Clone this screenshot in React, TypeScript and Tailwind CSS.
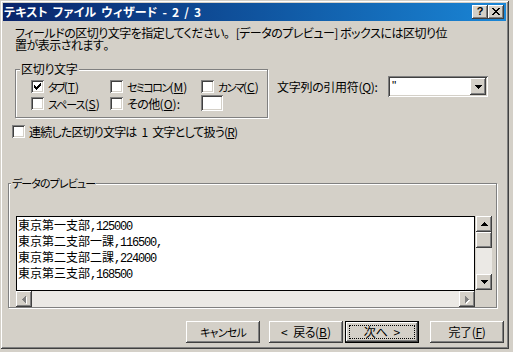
import React from 'react'

// ─────────────────────────────────────────────
// Pixel helpers (classic Windows bevels & glyphs)
// ─────────────────────────────────────────────

type Run = [number, number, number] // row, x0, x1

function Pix({ runs, color, w, h }: { runs: Run[]; color: string; w: number; h: number }) {
  return (
    <svg width={w} height={h} shapeRendering="crispEdges" className="block">
      {runs.map(([r, a, b], i) => (
        <rect key={i} x={a} y={r} width={b - a + 1} height={1} fill={color} />
      ))}
    </svg>
  )
}

const upRuns: Run[]   = [[0, 3, 3], [1, 2, 4], [2, 1, 5], [3, 0, 6]]
const downRuns: Run[] = [[0, 0, 6], [1, 1, 5], [2, 2, 4], [3, 3, 3]]
const leftRuns: Run[] = [[0, 3, 3], [1, 2, 3], [2, 1, 3], [3, 0, 3], [4, 1, 3], [5, 2, 3], [6, 3, 3]]
const rightRuns: Run[] = [[0, 0, 0], [1, 0, 1], [2, 0, 2], [3, 0, 3], [4, 0, 2], [5, 0, 1], [6, 0, 0]]
const checkRuns: Run[] = [
  [0, 6, 6], [1, 5, 6], [2, 0, 0], [2, 4, 6], [3, 0, 1], [3, 3, 5],
  [4, 0, 4], [5, 1, 3], [6, 2, 2],
]

const raised = 'bg-[#d4d0c8] shadow-[inset_-1px_-1px_0_#404040,inset_1px_1px_0_#ffffff,inset_-2px_-2px_0_#808080]'
const sunken = 'bg-white shadow-[inset_1px_1px_0_#808080,inset_-1px_-1px_0_#ffffff,inset_2px_2px_0_#404040,inset_-2px_-2px_0_#d4d0c8]'
const etched = 'border border-[#808080] shadow-[inset_1px_1px_0_#ffffff,1px_1px_0_#ffffff]'

// kana in the old UI font are narrow: squeeze only the kana run, keep "(X)" as is
function Kana({ children, track }: { children: React.ReactNode; track: string }) {
  return <span className={`text-[11px] ${track}`}>{children}</span>
}

function Checkbox({ label, checked = false }: { label: React.ReactNode; checked?: boolean }) {
  return (
    <div className="flex items-center h-[13px]">
      <div className={`w-[13px] h-[13px] shrink-0 flex items-center justify-center ${sunken}`}>
        {checked && <Pix runs={checkRuns} color="#000" w={7} h={7} />}
      </div>
      <span className="ml-[4px] leading-[13px] whitespace-nowrap">{label}</span>
    </div>
  )
}

function ArrowBtn({ runs, w, h, disabled }: { runs: Run[]; w: number; h: number; disabled?: boolean }) {
  return (
    <div className={`w-[16px] h-[16px] shrink-0 flex items-center justify-center ${raised}`}>
      {disabled ? (
        <div className="relative">
          <div className="absolute left-[1px] top-[1px]"><Pix runs={runs} color="#fff" w={w} h={h} /></div>
          <div className="relative"><Pix runs={runs} color="#808080" w={w} h={h} /></div>
        </div>
      ) : (
        <Pix runs={runs} color="#000" w={w} h={h} />
      )}
    </div>
  )
}

function Button({ children, isDefault }: { children: React.ReactNode; isDefault?: boolean }) {
  if (isDefault) {
    return (
      <div className="w-[74px] h-[22px] border border-black">
        <div className={`w-full h-full p-[3px] ${raised}`}>
          <div className="w-full h-full border border-dotted border-black flex items-center justify-center leading-[12px] whitespace-nowrap">
            {children}
          </div>
        </div>
      </div>
    )
  }
  return (
    <div className={`w-[74px] h-[22px] flex items-center justify-center leading-[12px] whitespace-nowrap ${raised}`}>
      {children}
    </div>
  )
}

const listRows: [string, string][] = [
  ['東京第一支部', ',125000'],
  ['東京第二支部一課', ',116500,'],
  ['東京第二支部二課', ',224000'],
  ['東京第三支部', ',168500'],
]

// ─────────────────────────────────────────────
// Main Component
// ─────────────────────────────────────────────

export default function App() {
  return (
    <div className="w-[513px] h-[352px] bg-[#d4d0c8] overflow-hidden text-black text-[12px] font-['Noto_Sans_CJK_JP',sans-serif] [font-feature-settings:'palt']">
      <div className="w-[509px] h-[349px] p-[3px] flex flex-col shadow-[inset_1px_1px_0_#d4d0c8,inset_-1px_-1px_0_#404040,inset_2px_2px_0_#ffffff,inset_-2px_-2px_0_#808080]">

        {/* Title bar */}
        <div className="h-[18px] shrink-0 flex items-center bg-linear-to-r from-[#0a246a] to-[#1a86d6]">
          <span className="ml-[1px] text-white font-bold text-[12px] leading-[18px] whitespace-nowrap tracking-[0.2px] [word-spacing:2px]">
            テキスト ファイル ウィザード - 2 / 3
          </span>
          <div className="ml-auto mr-[2px] flex">
            <div className={`w-[16px] h-[14px] flex items-center justify-center ${raised}`}>
              <span className="font-['Liberation_Sans',sans-serif] font-bold text-[11px] leading-[11px] -mt-[1px]">?</span>
            </div>
            <div className={`w-[16px] h-[14px] flex items-center justify-center ${raised}`}>
              <svg width="8" height="7" shapeRendering="crispEdges" className="block -mt-[1px]">
                <path d="M0 0h2v1H0zM6 0h2v1H6zM1 1h2v1H1zM5 1h2v1H5zM2 2h4v1H2zM3 3h2v1H3zM2 4h4v1H2zM1 5h2v1H1zM5 5h2v1H5zM0 6h2v1H0zM6 6h2v1H6z" fill="#000" />
              </svg>
            </div>
          </div>
        </div>

        {/* Description */}
        <p className="mt-[6px] ml-[12px] leading-[12px] whitespace-nowrap tracking-[-0.5px]">
          フィールドの区切り文字を指定してください<span className="[font-feature-settings:normal]">。</span>[データのプレビュー] ボックスには区切り位
          <br />
          置が表示されます<span className="[font-feature-settings:normal]">。</span>
        </p>

        {/* Delimiters + text qualifier */}
        <div className="flex mt-[18px] ml-[12px]">
          <div className={`relative w-[253px] h-[49px] ${etched}`}>
            <span className="absolute left-[4px] -top-[7px] px-[1px] bg-[#d4d0c8] leading-[12px] tracking-[-0.3px]">区切り文字</span>
            <div className="pt-[10px] pl-[15px] grid grid-cols-[79px_91px_auto] gap-y-[4px]">
              <Checkbox checked label={<><Kana track="tracking-[-1.8px]">タブ</Kana>(<u>T</u>)</>} />
              <Checkbox label={<><Kana track="tracking-[-1.6px]">セミコロン</Kana>(<u>M</u>)</>} />
              <Checkbox label={<><Kana track="tracking-[-1.6px]">カンマ</Kana>(<u>C</u>)</>} />
              <Checkbox label={<><Kana track="tracking-[-1px]">スペース</Kana>(<u>S</u>)</>} />
              <Checkbox label={<><span className="tracking-[-0.6px]">その他</span>(<u>O</u>):</>} />
              <div className={`w-[22px] h-[16px] -mt-[2px] ${sunken}`} />
            </div>
          </div>

          <div className="ml-[9px] mt-[7px] h-[21px] flex items-center">
            <span className="w-[111px] whitespace-nowrap tracking-[-0.3px]">文字列の引用符(<u>Q</u>):</span>
            <div className={`w-[100px] h-[21px] p-[2px] flex ${sunken}`}>
              <span className="flex-1 pl-[2px] leading-[17px] font-['Liberation_Sans',sans-serif]">"</span>
              <div className={`w-[16px] h-[17px] flex items-center justify-center ${raised}`}>
                <Pix runs={downRuns} color="#000" w={7} h={4} />
              </div>
            </div>
          </div>
        </div>

        {/* Consecutive delimiters */}
        <div className="mt-[7px] ml-[9px]">
          <Checkbox label={<span className="tracking-[-0.8px] [word-spacing:3px]">連続した区切り文字は 1 文字として扱う(<u>R</u>)</span>} />
        </div>

        {/* Data preview */}
        <div className={`relative mt-[45px] ml-[5px] w-[489px] h-[125px] ${etched}`}>
          <span className="absolute left-[2px] -top-[7px] px-[1px] bg-[#d4d0c8] leading-[12px]">
            <Kana track="tracking-[-0.9px]">データのプレビュー</Kana>
          </span>
          <div className="pt-[32px] pl-[7px] flex">
            <div className="flex flex-col">
              <div className="w-[459px] h-[75px] bg-white border border-black pl-[1px]">
                {listRows.map(([jp, num], i) => (
                  <div key={i} className="h-[16px] leading-[16px] whitespace-nowrap [font-feature-settings:normal]">
                    <span>{jp}</span>
                    <span className="font-['Liberation_Mono',monospace] tracking-[-1.2px]">{num}</span>
                  </div>
                ))}
              </div>
              <div className="w-[459px] h-[16px] flex bg-[#ebe9e5]">
                <ArrowBtn runs={leftRuns} w={4} h={7} disabled />
                <div className="flex-1" />
                <ArrowBtn runs={rightRuns} w={4} h={7} disabled />
              </div>
            </div>
            <div className="ml-[1px] w-[16px] h-[74px] flex flex-col bg-[#ebe9e5]">
              <ArrowBtn runs={upRuns} w={7} h={4} />
              <div className={`w-[16px] h-[16px] ${raised}`} />
              <div className="flex-1" />
              <ArrowBtn runs={downRuns} w={7} h={4} />
            </div>
          </div>
        </div>

        {/* Action buttons */}
        <div className="mt-[13px] ml-[183px] flex">
          <Button><Kana track="tracking-[-0.8px]">キャンセル</Kana></Button>
          <div className="ml-[9px]"><Button><span className="[word-spacing:3px]">&lt; <span className="tracking-[-0.5px]">戻る</span>(<u>B</u>)</span></Button></div>
          <div className="ml-[2px]"><Button isDefault><span className="[word-spacing:3px]">次へ &gt;</span></Button></div>
          <div className="ml-[11px]"><Button><span className="tracking-[-0.3px]">完了(<u>F</u>)</span></Button></div>
        </div>
      </div>
    </div>
  )
}
